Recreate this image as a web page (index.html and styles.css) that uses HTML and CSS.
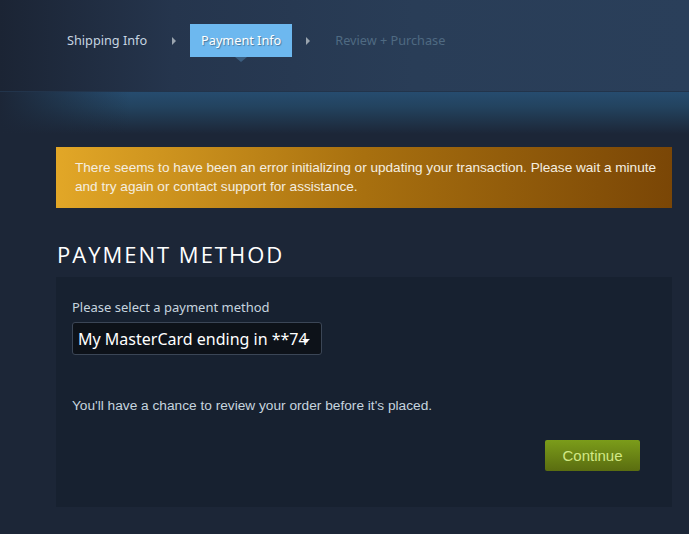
FILE: index.html
```html
<!DOCTYPE html>
<html>
<head>
<meta charset="utf-8">
<link rel="stylesheet" href="styles.css">
</head>
<body>
<header class="header">
  <nav class="crumbs">
    <span class="crumb">Shipping Info</span>
    <span class="sep"></span>
    <span class="crumb active">Payment Info</span>
    <span class="sep"></span>
    <span class="crumb future">Review + Purchase</span>
  </nav>
</header>
<div class="band"></div>
<main class="content">
  <div class="error">There seems to have been an error initializing or updating your transaction. Please wait a minute and try again or contact support for assistance.</div>
  <h2 class="title">PAYMENT METHOD</h2>
  <section class="panel">
    <div class="label">Please select a payment method</div>
    <div class="select">
      <span class="select-text">My MasterCard ending in **74</span>
      <span class="select-arrow"></span>
    </div>
    <p class="note">You'll have a chance to review your order before it's placed.</p>
    <div class="actions">
      <button class="continue">Continue</button>
    </div>
  </section>
</main>
</body>
</html>
```
FILE: styles.css
```css
html, body {
  margin: 0;
  padding: 0;
}
body {
  background: #1c2637;
  font-family: "Noto Sans", "Liberation Sans", sans-serif;
  color: #c6d4df;
  width: 689px;
  height: 534px;
  overflow: hidden;
}
.header {
  height: 92px;
  border-bottom: 1px solid #22344b;
  background: linear-gradient(to right, #1b2434 0%, #25354d 25%, #293d57 60%, #2a3f5a 100%);
  box-sizing: border-box;
  padding: 24px 0 0 56px;
}
.crumbs {
  display: flex;
  align-items: center;
  height: 33px;
}
.crumb {
  padding: 0 11px;
  font-size: 12.7px;
  line-height: 33px;
  color: #c7d5e0;
  white-space: nowrap;
}
.crumb.active {
  position: relative;
  background: #6db8ef;
  color: #ffffff;
  text-shadow: 1px 1px 1px rgba(0,0,0,0.35);
}
.crumb.active::after {
  content: "";
  position: absolute;
  left: 50%;
  bottom: -5px;
  margin-left: -6px;
  border-left: 6px solid transparent;
  border-right: 6px solid transparent;
  border-top: 5px solid #3b5e80;
}
.crumb.future {
  color: #4f6a82;
}
.sep {
  width: 0;
  height: 0;
  margin: 0 14px;
  border-top: 4px solid transparent;
  border-bottom: 4px solid transparent;
  border-left: 4px solid #9aa4ae;
}
.band {
  height: 42px;
  background:
    linear-gradient(to right, #1c2637 0px, rgba(28,38,55,0) 130px),
    linear-gradient(to bottom, #264c6f 0%, #23435f 35%, #1c2637 100%);
}
.content {
  margin: 13px 0 0 56px;
  width: 616px;
}
.error {
  background: linear-gradient(to right, #e2a727 0%, #a8700f 50%, #7a4606 100%);
  color: #f4eee0;
  font-family: "Liberation Sans", sans-serif;
  font-size: 13.6px;
  line-height: 19px;
  padding: 11px 14px 12px 19px;
}
.title {
  margin: 0;
  padding: 31px 0 0 1px;
  font-family: "Open Sans", sans-serif;
  font-weight: 400;
  font-size: 22px;
  letter-spacing: 2px;
  line-height: 30px;
  color: #ffffff;
}
.panel {
  margin-top: 8px;
  background: #172130;
  padding: 22px 32px 36px 16px;
}
.label {
  font-size: 13px;
  line-height: 17px;
  color: #c6d4df;
}
.select {
  margin-top: 6px;
  width: 250px;
  height: 33px;
  box-sizing: border-box;
  background: #0d1219;
  border: 1px solid #3b4656;
  border-radius: 3px;
  display: flex;
  align-items: center;
  position: relative;
  padding-left: 5px;
}
.select-text {
  font-size: 16px;
  color: #ffffff;
  white-space: nowrap;
}
.select-arrow {
  position: absolute;
  left: 229px;
  top: 16px;
  width: 0;
  height: 0;
  border-left: 4px solid transparent;
  border-right: 4px solid transparent;
  border-top: 4px solid #ffffff;
}
.note {
  margin: 42px 0 0 0;
  font-family: "Liberation Sans", sans-serif;
  font-size: 13.7px;
  line-height: 17px;
  color: #c6d4df;
}
.actions {
  display: flex;
  justify-content: flex-end;
  margin-top: 26px;
}
.continue {
  width: 95px;
  height: 31px;
  border: none;
  border-radius: 2px;
  background: linear-gradient(to bottom, #7b9c1a 0%, #5a6d10 100%);
  color: #d2e885;
  font-family: "Liberation Sans", sans-serif;
  font-size: 15px;
  padding: 0;
}
```
